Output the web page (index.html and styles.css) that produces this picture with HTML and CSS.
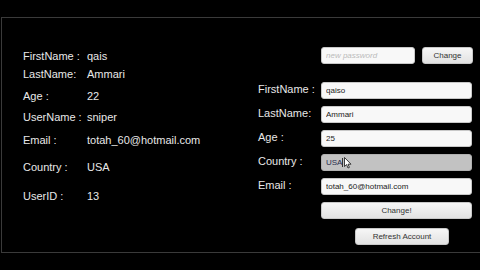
FILE: index.html
```html
<!DOCTYPE html>
<html lang="en">
	<head>
		<meta charset="UTF-8">
		<meta name="viewport" content="width=device-width, initial-scale=1.0">
		<title>Account</title>
		<link rel="stylesheet" href="styles.css">
	</head>
	<body>
		<div class="panel">
			<!--Current account info-->
			<div class="info">
				<span class="lbl">FirstName :</span><span>qais</span>
				<span class="lbl">LastName:</span><span>Ammari</span>
				<span class="lbl">Age :</span><span>22</span>
				<span class="lbl">UserName :</span><span>sniper</span>
				<span class="lbl">Email :</span><span>totah_60@hotmail.com</span>
				<span class="lbl">Country :</span><span>USA</span>
				<span class="lbl">UserID :</span><span>13</span>
			</div>

			<!--Edit form-->
			<div class="edit">
				<div class="pass">
					<input type="password" class="field" placeholder="new password">
					<button class="btn btnSmall">Change</button>
				</div>
				<div class="form">
					<label for="fn">FirstName :</label>
					<input type="text" id="fn" class="field" value="qaiso">
					<label for="ln">LastName:</label>
					<input type="text" id="ln" class="field" value="Ammari">
					<label for="age">Age :</label>
					<input type="text" id="age" class="field" value="25">
					<label for="country">Country :</label>
					<div class="hover">
						<input type="text" id="country" class="field active" value="USA">
						<span class="caret"></span>
						<svg class="pointer" width="8" height="12" viewBox="0 0 8 12"><path d="M0.5 0.5 L0.5 9.5 L2.6 7.6 L4 11 L5.4 10.4 L4 7.2 L7 7.2 Z" fill="#fff" stroke="#111" stroke-width="0.8"/></svg>
					</div>
					<label for="email">Email :</label>
					<input type="text" id="email" class="field" value="totah_60@hotmail.com">
					<span></span>
					<button class="btn">Change!</button>
				</div>
				<button class="btn btnRefresh">Refresh Account</button>
			</div>
		</div>
	</body>
</html>
```

FILE: styles.css
```css
* {
	box-sizing: border-box;
}

body {
	margin: 0;
	background: #000;
	color: #e8e8e8;
	font-family: "Liberation Sans", Arial, sans-serif;
	font-size: 11px;
}

/* Outlined panel, open on the right */
.panel {
	display: flex;
	margin: 17px 0 0 1px;
	height: 236px;
	padding-top: 29px;
	border: 1px solid #3a3a3a;
	border-right: none;
}

/* Left side: label / value pairs */
.info {
	display: grid;
	grid-template-columns: 64px 1fr;
	grid-template-rows: 18px 22px 21px 23px 27px 29px 18px;
	align-content: start;
	width: 256px;
	padding-left: 21px;
	line-height: 18px;
}

/* Right side */
.edit {
	display: flex;
	flex-direction: column;
	width: 216px;
}

.pass {
	display: flex;
	gap: 7px;
	margin-left: 63px;
}
.pass .field {width: 94px;}

.form {
	display: grid;
	grid-template-columns: 63px 151px;
	grid-auto-rows: 17px;
	row-gap: 7px;
	margin-top: 18px;
	align-items: center;
}
.form label {font-size: 11px; margin-top: -3px;}

.field, .btn {
	height: 17px;
	margin: 0;
	border: 1px solid #c8c8c8;
	border-radius: 3px;
	font-family: "Liberation Sans", Arial, sans-serif;
	font-size: 8px;
	color: #222;
}

.field {
	width: 151px;
	padding: 0 4px;
	background: #f8f8f8;
	outline: none;
}
.field::placeholder {color: #bbb; font-style: italic;}
.field.active {background: #c2c2c2; border-color: #b0b0b0; color: #2a2f4e;}

.btn {
	background: linear-gradient(#f6f6f6, #e2e2e2);
	color: #333;
	padding: 0;
}
.btnSmall {width: 51px;}
.btnRefresh {width: 94px; margin: 9px 0 0 97px;}

/* Mouse pointer over the country field */
.hover {position: relative; height: 17px;}
.caret {position: absolute; left: 21px; top: 4px; width: 1px; height: 9px; background: #333;}
.pointer {position: absolute; left: 23px; top: 3px;}
```
